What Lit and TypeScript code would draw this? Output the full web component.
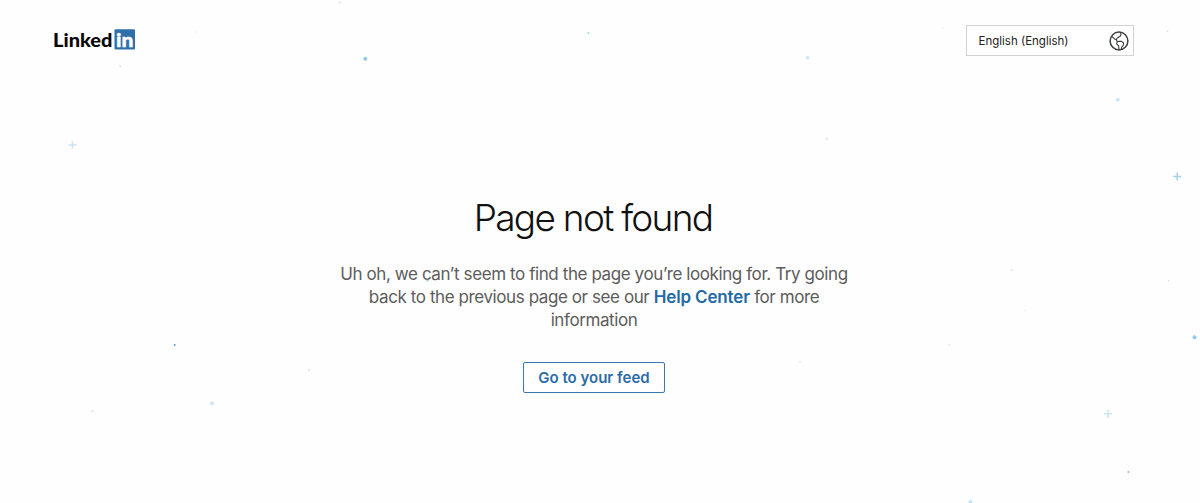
import { LitElement, html, svg, css } from "lit";
import { customElement } from "lit/decorators.js";

type Dot = [x: number, y: number, r: number, color: string];
type Plus = [x: number, y: number, color: string];

const DOTS: Dot[] = [
  [365.3, 58.7, 2, "#8fcbe6"],
  [807.6, 57.7, 1.8, "#cde6f6"],
  [1117.8, 99.8, 1.9, "#c8e5f5"],
  [1194.5, 337.3, 2, "#8fcae6"],
  [212, 403.3, 2, "#d3e4f1"],
  [970.4, 501.8, 1.9, "#c4e2f3"],
  [174.7, 345, 1.1, "#5fa3c6"],
  [588.4, 33, 1, "#a9d3d6"],
  [1128.5, 472, 1.1, "#8cc8dc"],
  [1167.6, 31, 0.8, "#cfdadd"],
  [339.7, 2.3, 1.2, "#e6ebed"],
  [120.3, 66.3, 1.1, "#e2e8ea"],
  [826.7, 138.8, 1.2, "#e4eaec"],
  [1011.6, 270, 1.2, "#e6ebee"],
  [1168.6, 280.8, 0.8, "#d5dfe4"],
  [1025.3, 310.5, 1.2, "#f1f3f4"],
  [949.3, 345, 1.1, "#e2e8ea"],
  [800, 362, 1.1, "#ebeef0"],
  [308.8, 370, 1.2, "#e6eaec"],
  [92.4, 411, 1.2, "#e4e9ec"],
  [196, 32, 1.3, "#f5f7f8"],
  [943.5, 28, 1.2, "#f4f6f7"],
  [591.5, 301, 0.8, "#c3dfe8"],
  [427.5, 280.5, 1, "#8dc4e2"],
];

const PLUSES: Plus[] = [
  [72.4, 144.9, "#cde5f2"],
  [1177.2, 176.6, "#a6d0ea"],
  [1108.1, 413.8, "#cbe3f3"],
];

@customElement("app-root")
export class AppRoot extends LitElement {
  static styles = css`
    :host {
      display: flex;
      flex-direction: column;
      position: relative;
      box-sizing: border-box;
      height: 503px;
      overflow: hidden;
      background: #fefefe;
      font-family: Inter, "Liberation Sans", sans-serif;
    }
    .sky {
      position: absolute;
      inset: 0;
      pointer-events: none;
    }
    .header {
      display: flex;
      justify-content: space-between;
      align-items: flex-start;
      padding: 25px 66px 0 54px;
    }
    .logo {
      display: block;
      margin-top: 4px;
      overflow: visible;
    }
    .word {
      font: 900 19px Lato, sans-serif;
      fill: #070707;
    }
    .mark {
      font: 900 18.5px Lato, sans-serif;
      fill: #fff;
      stroke: #fff;
      stroke-width: 0.4px;
    }
    .language {
      box-sizing: border-box;
      display: flex;
      align-items: center;
      justify-content: space-between;
      width: 168px;
      height: 31px;
      padding: 0 4px 0 11.5px;
      border: 1px solid #d2d2d2;
      border-radius: 0;
      background: #fff;
      font: 400 11.5px Inter, sans-serif;
      color: #222;
    }
    .main {
      display: flex;
      flex-direction: column;
      align-items: center;
      width: 540px;
      margin: 138px 0 0 324px;
      text-align: center;
    }
    .title {
      margin: 0;
      padding-right: 2px;
      font-size: 37px;
      line-height: 48px;
      font-weight: 300;
      letter-spacing: -1.7px;
      color: #111;
    }
    .message {
      margin: 21px 0 0;
      font-size: 17px;
      line-height: 23px;
      letter-spacing: -0.41px;
      white-space: nowrap;
      color: #5c5c5c;
    }
    .help {
      font-weight: 600;
      letter-spacing: -0.15px;
      color: #2369a6;
      text-decoration: none;
    }
    .feed {
      box-sizing: border-box;
      display: flex;
      align-items: center;
      justify-content: center;
      width: 142px;
      height: 31px;
      margin-top: 30px;
      border: 1px solid #3b76ac;
      border-radius: 2px;
      background: #fff;
      font-size: 15px;
      font-weight: 600;
      color: #2b6ba6;
      text-decoration: none;
      white-space: nowrap;
    }
  `;

  render() {
    return html`
      <header class="header">
        <svg class="logo" width="82" height="22" viewBox="0 0 82 22" role="img" aria-label="LinkedIn">
          <text class="word" x="-1" y="17.5" textLength="59.5" lengthAdjust="spacingAndGlyphs">Linked</text>
          <rect x="60.5" y="0.2" width="20.5" height="20.4" rx="1.3" fill="#2e6faa" />
          <text class="mark" x="62" y="17.5" textLength="17.4" lengthAdjust="spacingAndGlyphs">in</text>
        </svg>
        <button class="language">
          <span>English (English)</span>
          <svg width="20" height="20" viewBox="0 0 20 20" fill="none" stroke="#3c3f44">
            <circle cx="10" cy="10" r="8.9" stroke-width="1.5" />
            <path
              stroke-width="1.1"
              stroke-linejoin="round"
              d="M2.8 5.4 5.6 7.9 7.4 8.8 8.1 7.1 10.8 5.6 12 3.6 11.6 1.4M7.4 8.8 8.2 10.7 10.2 10.2 12.6 10.4 14.6 12 14.3 14.3 12.7 16.2 12.2 18.5M8.2 10.7 7.6 12.8 9.5 14.7 10.2 18.8"
            />
          </svg>
        </button>
      </header>
      <main class="main">
        <h1 class="title">Page not found</h1>
        <p class="message">
          Uh oh, we can’t seem to find the page you’re looking for. Try going<br />
          back to the previous page or see our <a class="help" href="#">Help Center</a> for more<br />
          information
        </p>
        <a class="feed" href="#">Go to your feed</a>
      </main>
      <svg class="sky" width="1200" height="503" aria-hidden="true">
        ${DOTS.map(([x, y, r, c]) => svg`<circle cx=${x} cy=${y} r=${r} fill=${c} />`)}
        ${PLUSES.map(
          ([x, y, c]) =>
            svg`<path d=${`M${x - 4} ${y}h8M${x} ${y - 4}v8`} stroke=${c} stroke-width="1.5" />`
        )}
      </svg>
    `;
  }
}
